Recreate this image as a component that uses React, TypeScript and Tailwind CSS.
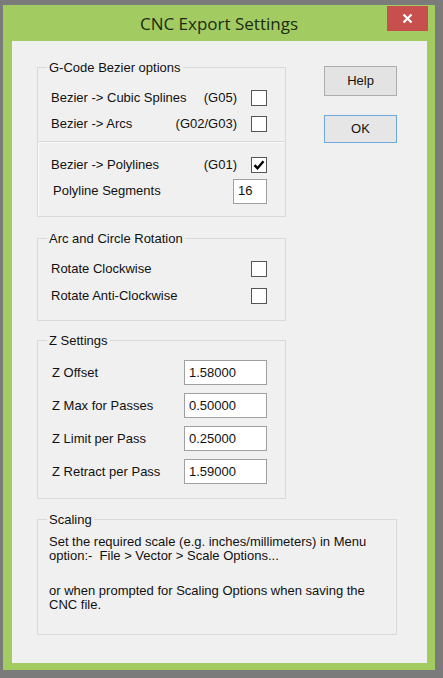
import React from 'react';

const font = { fontFamily: '"Liberation Sans", Arial, sans-serif' };

const GroupBox: React.FC<{ title: string; className?: string; children: React.ReactNode }> = ({ title, className = '', children }) => (
  <div className={`relative border border-[#d9d9d9] ${className}`}>
    <span className="absolute -top-[8px] left-[9px] px-[2px] bg-[#f0f0f0] text-[13px] leading-[15px] text-[#111]">{title}</span>
    {children}
  </div>
);

const CheckBox: React.FC<{ checked?: boolean }> = ({ checked }) => (
  <div className="w-[16px] h-[16px] border border-[#555] bg-white flex items-center justify-center shrink-0">
    {checked && (
      <svg width="12" height="12" viewBox="0 0 12 12">
        <path d="M1.5 6.2 L4.5 9.2 L10.5 2.2" fill="none" stroke="#000" strokeWidth="2.4" />
      </svg>
    )}
  </div>
);

const TextField: React.FC<{ value: string; width: string }> = ({ value, width }) => (
  <div className={`${width} h-[25px] border border-[#a0a0a0] bg-white flex items-center pl-[4px] text-[13px] text-[#111]`}>{value}</div>
);

const CheckRow: React.FC<{ label: string; code?: string; checked?: boolean; height: string }> = ({ label, code, checked, height }) => (
  <div className={`${height} flex items-center pl-[13px] pr-[18px] text-[13px] text-[#111]`}>
    <span className="flex-1">{label}</span>
    {code && <span className="mr-[14px]">{code}</span>}
    <CheckBox checked={checked} />
  </div>
);

const ZRow: React.FC<{ label: string; value: string }> = ({ label, value }) => (
  <div className="h-[33px] flex items-center pl-[14px] pr-[18px] text-[13px] text-[#111]">
    <span className="flex-1">{label}</span>
    <TextField value={value} width="w-[83px]" />
  </div>
);

export default function App() {
  return (
    <div className="w-[443px] h-[678px] bg-[#7b7b7b] pt-[5px] pl-[3px] overflow-hidden" style={font}>
      <div className="w-[432px] h-[665px] bg-[#a2cc62] flex flex-col">
        <div className="h-[36px] relative flex items-center justify-center">
          <span className="text-[17px] text-[#1c2b12] mt-[2px]" style={{ fontFamily: '"Open Sans", "Noto Sans", sans-serif' }}>CNC Export Settings</span>
          <div className="absolute right-[7px] top-[1px] w-[41px] h-[25px] bg-[#c7504f] flex items-center justify-center">
            <svg width="11" height="11" viewBox="0 0 11 11">
              <path d="M1.5 1.5 L9.5 9.5 M9.5 1.5 L1.5 9.5" stroke="#fff" strokeWidth="2.2" />
            </svg>
          </div>
        </div>

        <div className="ml-[9px] w-[415px] h-[622px] bg-[#f0f0f0] pl-[25px] pt-[26px] flex flex-col">
          <div className="flex">
            <div className="w-[249px] flex flex-col">
              <GroupBox title="G-Code Bezier options" className="h-[150px] flex flex-col">
                <div className="pt-[17px]">
                  <CheckRow label="Bezier -> Cubic Splines" code="(G05)" height="h-[26px]" />
                  <CheckRow label="Bezier -> Arcs" code="(G02/G03)" height="h-[26px]" />
                </div>
                <div className="mt-[4px] flex-1 border-t border-[#d9d9d9] shadow-[inset_1px_1px_0_#fafafa] pt-[10px]">
                  <CheckRow label="Bezier -> Polylines" code="(G01)" checked height="h-[26px]" />
                  <div className="h-[26px] flex items-center pl-[15px] pr-[18px] text-[13px] text-[#111]">
                    <span className="flex-1">Polyline Segments</span>
                    <TextField value="16" width="w-[34px]" />
                  </div>
                </div>
              </GroupBox>

              <GroupBox title="Arc and Circle Rotation" className="mt-[21px] h-[83px] pt-[16px]">
                <CheckRow label="Rotate Clockwise" height="h-[27px]" />
                <CheckRow label="Rotate Anti-Clockwise" height="h-[27px]" />
              </GroupBox>

              <GroupBox title="Z Settings" className="mt-[19px] h-[159px] pt-[15px]">
                <ZRow label="Z Offset" value="1.58000" />
                <ZRow label="Z Max for Passes" value="0.50000" />
                <ZRow label="Z Limit per Pass" value="0.25000" />
                <ZRow label="Z Retract per Pass" value="1.59000" />
              </GroupBox>
            </div>

            <div className="ml-[38px] -mt-[1px] flex flex-col">
              <button className="w-[73px] h-[30px] border border-[#adadad] bg-[#e3e3e3] text-[13px] text-[#111]">Help</button>
              <button className="mt-[19px] w-[73px] h-[28px] border border-[#6fa8dc] bg-[#e6e6e6] text-[13px] text-[#111]">OK</button>
            </div>
          </div>

          <GroupBox title="Scaling" className="mt-[20px] w-[360px] h-[116px] pt-[15px] pl-[11px] text-[13px] leading-[14px] text-[#111]">
            <p>
              Set the required scale (e.g. inches/millimeters) in Menu
              <br />
              option:-&nbsp; File &gt; Vector &gt; Scale Options...
            </p>
            <p className="mt-[21px]">
              or when prompted for Scaling Options when saving the
              <br />
              CNC file.
            </p>
          </GroupBox>
        </div>
      </div>
    </div>
  );
}
